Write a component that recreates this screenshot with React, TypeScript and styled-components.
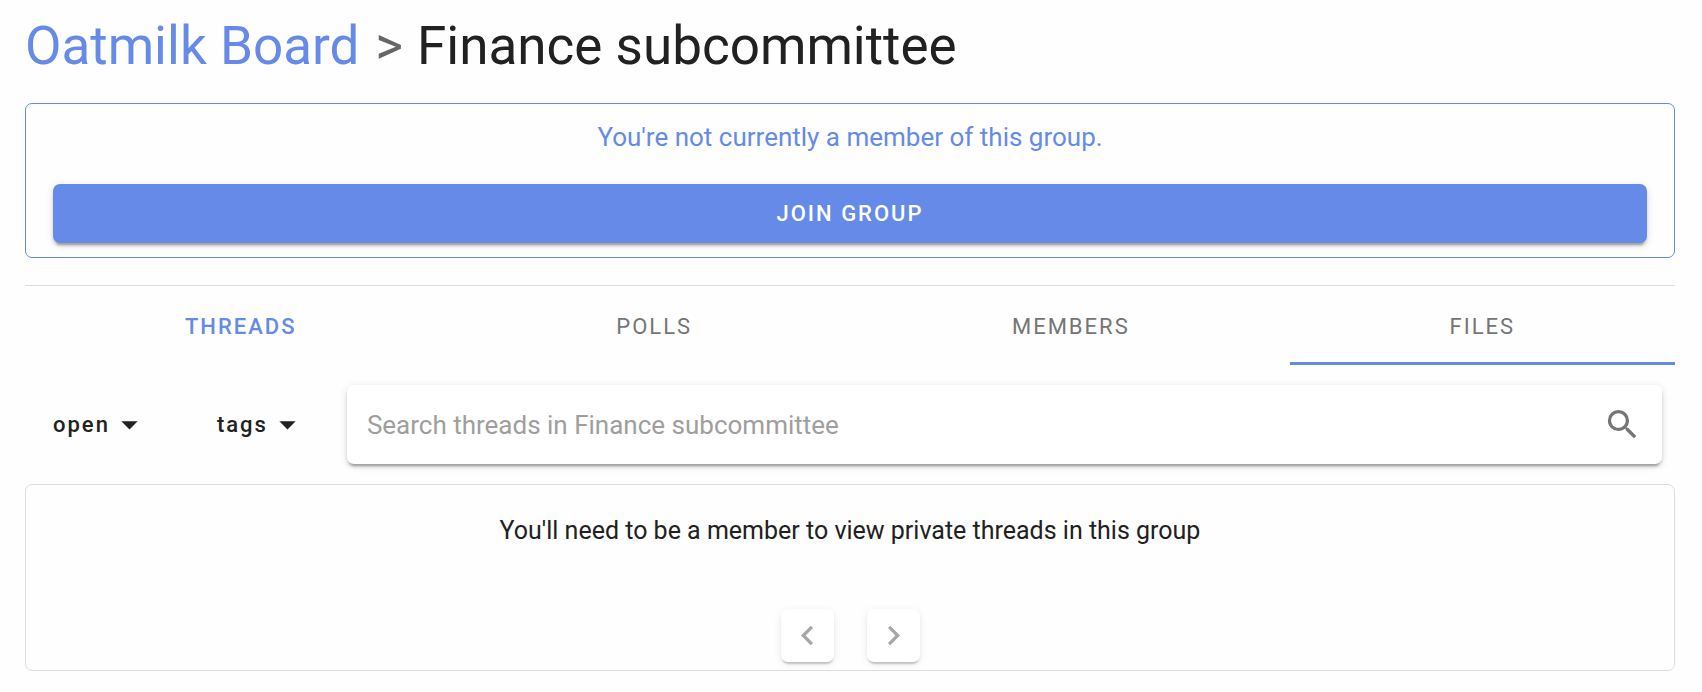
import React from "react";
import styled, { createGlobalStyle } from "styled-components";

const blue = "#658ae7";
const ink = "#212121";
const line = "#dddddd";
const raised =
  "0 5px 2px -3px rgba(0,0,0,.2), 0 3px 3px 0 rgba(0,0,0,.14), 0 2px 8px 0 rgba(0,0,0,.12)";
const raisedSoft =
  "0 4px 2px -2px rgba(0,0,0,.14), 0 2px 2px 0 rgba(0,0,0,.08), 0 2px 8px 0 rgba(0,0,0,.08)";

const GlobalStyle = createGlobalStyle`
  *, *::before, *::after { box-sizing: border-box; }
  body {
    margin: 0;
    background: #fefefe;
    color: ${ink};
    font-family: Roboto, "Liberation Sans", sans-serif;
    font-size: 26px;
    line-height: 40px;
  }
  button, input { font: inherit; color: inherit; }
  button { border: 0; padding: 0; background: none; cursor: pointer; }
`;

const Page = styled.main`
  padding: 14px 27px 20px 25px;
`;

const Title = styled.h1`
  margin: 0 0 25px;
  font-size: 53px;
  line-height: 64px;
  font-weight: 400;
`;

const ParentLink = styled.a`
  color: ${blue};
  text-decoration: none;
`;

const Separator = styled.span`
  margin: 0 14px 0 16px;
  color: #666;
`;

const JoinPanel = styled.section`
  padding: 13px 27px 14px;
  border: 1px solid ${blue};
  border-radius: 7px;
  text-align: center;
`;

const JoinText = styled.p`
  margin: 0 0 27px;
  color: ${blue};
`;

const JoinButton = styled.button`
  display: block;
  width: 100%;
  height: 59px;
  border-radius: 7px;
  background: ${blue};
  color: #fff;
  font-size: 22px;
  font-weight: 500;
  letter-spacing: 2px;
  text-transform: uppercase;
  box-shadow: ${raised};
`;

const Tabs = styled.nav`
  display: flex;
  margin-top: 27px;
  border-top: 1px solid ${line};
`;

const Tab = styled.a<{ $current?: boolean; $marked?: boolean }>`
  flex: 1 1 auto;
  display: flex;
  align-items: center;
  justify-content: center;
  height: 79px;
  padding: 6px 26px 0;
  border-bottom: 3px solid ${(p) => (p.$marked ? blue : "transparent")};
  color: ${(p) => (p.$current ? blue : "#757575")};
  font-size: 22px;
  font-weight: ${(p) => (p.$current ? 500 : 400)};
  letter-spacing: 2px;
  text-transform: uppercase;
  text-decoration: none;
`;

const Toolbar = styled.div`
  display: flex;
  align-items: center;
  gap: 12px;
  padding: 20px 13px 20px 0;
`;

const MenuButton = styled.button`
  display: flex;
  align-items: center;
  height: 59px;
  padding: 0 28px;
  font-size: 22px;
  font-weight: 500;
  letter-spacing: 2px;
`;

const SearchBox = styled.label`
  flex: 1;
  display: flex;
  align-items: center;
  height: 79px;
  padding: 0 20px;
  border-radius: 7px;
  background: #fff;
  color: #757575;
  box-shadow: ${raised};
`;

const SearchInput = styled.input`
  flex: 1;
  min-width: 0;
  height: 52px;
  padding: 0;
  border: 0;
  outline: 0;
  background: none;
  color: ${ink};
  &::placeholder { color: #9e9e9e; opacity: 1; }
`;

const ThreadsPanel = styled.section`
  padding: 26px 20px 8px;
  border: 1px solid ${line};
  border-radius: 7px;
  text-align: center;
`;

const ThreadsText = styled.p`
  margin: 0 0 58px;
  font-size: 25px;
`;

const Pager = styled.div`
  display: flex;
  justify-content: center;
  gap: 33px;
`;

const PageButton = styled.button`
  display: flex;
  align-items: center;
  justify-content: center;
  width: 53px;
  height: 53px;
  border-radius: 7px;
  background: #fff;
  color: #a6a6a6;
  box-shadow: ${raisedSoft};
`;

const Glyph = styled.svg`
  display: block;
  flex: none;
  width: 39px;
  height: 39px;
  fill: currentColor;
`;

const paths = {
  menuDown: "M7,10L12,15L17,10H7Z",
  magnify:
    "M9.5,3A6.5,6.5 0 0,1 16,9.5C16,11.11 15.41,12.59 14.44,13.73L14.71,14H15.5L20.5,19L19,20.5L14,15.5V14.71L13.73,14.44C12.59,15.41 11.11,16 9.5,16A6.5,6.5 0 0,1 3,9.5A6.5,6.5 0 0,1 9.5,3M9.5,5C7,5 5,7 5,9.5C5,12 7,14 9.5,14C12,14 14,12 14,9.5C14,7 12,5 9.5,5Z",
  chevronLeft: "M15.41,16.58L10.83,12L15.41,7.41L14,6L8,12L14,18L15.41,16.58Z",
  chevronRight: "M8.59,16.58L13.17,12L8.59,7.41L10,6L16,12L10,18L8.59,16.58Z",
};

function Icon({ name }: { name: keyof typeof paths }) {
  return (
    <Glyph viewBox="0 0 24 24" aria-hidden="true">
      <path d={paths[name]} />
    </Glyph>
  );
}

export default function App() {
  return (
    <>
      <GlobalStyle />
      <Page>
        <Title>
          <ParentLink href="#board">Oatmilk Board</ParentLink>
          <Separator>&gt;</Separator>
          Finance subcommittee
        </Title>
        <JoinPanel>
          <JoinText>You're not currently a member of this group.</JoinText>
          <JoinButton type="button">Join group</JoinButton>
        </JoinPanel>
        <Tabs>
          <Tab href="#threads" $current>Threads</Tab>
          <Tab href="#polls">Polls</Tab>
          <Tab href="#members">Members</Tab>
          <Tab href="#files" $marked>Files</Tab>
        </Tabs>
        <Toolbar>
          <MenuButton type="button" aria-haspopup="menu">
            open
            <Icon name="menuDown" />
          </MenuButton>
          <MenuButton type="button" aria-haspopup="menu">
            tags
            <Icon name="menuDown" />
          </MenuButton>
          <SearchBox>
            <SearchInput
              type="text"
              aria-label="Search threads"
              placeholder="Search threads in Finance subcommittee"
            />
            <Icon name="magnify" />
          </SearchBox>
        </Toolbar>
        <ThreadsPanel>
          <ThreadsText>You'll need to be a member to view private threads in this group</ThreadsText>
          <Pager>
            <PageButton type="button" aria-label="Previous page">
              <Icon name="chevronLeft" />
            </PageButton>
            <PageButton type="button" aria-label="Next page">
              <Icon name="chevronRight" />
            </PageButton>
          </Pager>
        </ThreadsPanel>
      </Page>
    </>
  );
}
